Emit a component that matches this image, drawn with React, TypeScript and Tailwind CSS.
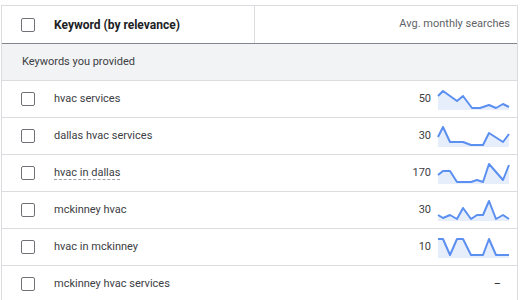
const ROWS: { keyword: string; searches: string; points?: number[][]; dotted?: boolean }[] = [
  {
    keyword: "hvac services",
    searches: "50",
    points: [[0, 7], [5, 2], [19, 12], [25, 7], [34, 19], [42, 19], [51, 16], [58, 19], [65, 15], [71, 18]],
  },
  {
    keyword: "dallas hvac services",
    searches: "30",
    points: [[0, 11], [5, 1], [12, 16], [25, 16], [33, 19], [45, 19], [51, 7], [65, 16], [71, 8]],
  },
  {
    keyword: "hvac in dallas",
    searches: "170",
    dotted: true,
    points: [[0, 12], [5, 8], [12, 8], [19, 19], [33, 19], [39, 17], [45, 19], [51, 1], [65, 17], [71, 2]],
  },
  {
    keyword: "mckinney hvac",
    searches: "30",
    points: [[0, 15], [5, 18], [12, 15], [19, 19], [25, 8], [33, 19], [39, 15], [45, 15], [51, 1], [58, 19], [65, 15], [71, 19]],
  },
  {
    keyword: "hvac in mckinney",
    searches: "10",
    points: [[0, 2], [5, 2], [12, 18], [19, 2], [25, 2], [33, 18], [45, 18], [51, 2], [58, 18], [71, 18]],
  },
  { keyword: "mckinney hvac services", searches: "–" },
];

function Checkbox() {
  return <div className="h-[14px] w-[14px] shrink-0 rounded-[2px] border-[1.5px] border-[#6f7377] bg-white" />;
}

function Sparkline({ points }: { points: number[][] }) {
  const line = points.map((p) => `${p[0] + 1},${p[1] + 1}`).join(" ");
  const area = `1,22 ${line} 72,22`;
  return (
    <svg width="73" height="23" viewBox="0 0 73 23" className="ml-[6px] block">
      <polygon points={area} fill="#e6eefc" />
      <polyline points={line} fill="none" stroke="#5b8ff0" strokeWidth="2" strokeLinejoin="round" />
    </svg>
  );
}

export default function App() {
  return (
    <div className="h-[300px] w-[521px] overflow-hidden bg-white pt-[5px] pl-[1px] font-['Roboto',sans-serif] text-[11px]">
      <div className="w-[517px] border-t border-r border-l border-[#dadce0]">
        {/* header */}
        <div className="flex h-[38px] border-b border-[#80868b]">
          <div className="flex w-[253px] items-center border-r border-[#dadce0] pl-[19px]">
            <Checkbox />
            <span className="ml-[19px] text-[12px] font-bold text-[#202124]">Keyword (by relevance)</span>
          </div>
          <div className="flex flex-1 items-center justify-end pr-[7px] text-[#5f6368]">
            Avg. monthly searches
          </div>
        </div>

        {/* group */}
        <div className="flex h-[37px] items-center border-b border-[#dadce0] bg-[#f1f3f4] pl-[20px] text-[#3c4043]">
          Keywords you provided
        </div>

        {ROWS.map((r) => (
          <div key={r.keyword} className="flex h-[37px] items-center border-b border-[#dadce0]">
            <div className="flex w-[253px] items-center pl-[19px]">
              <Checkbox />
              <span
                className={
                  "ml-[19px] text-[#3c4043] " +
                  (r.dotted ? "underline decoration-dashed decoration-[#9aa0a6] underline-offset-[3px]" : "")
                }
              >
                {r.keyword}
              </span>
            </div>
            <div className="flex flex-1 items-center justify-end pr-[7px] text-[#3c4043]">
              {r.points ? (
                <>
                  <span>{r.searches}</span>
                  <Sparkline points={r.points} />
                </>
              ) : (
                <span className="mr-[9px] text-[#202124]">{r.searches}</span>
              )}
            </div>
          </div>
        ))}
      </div>
    </div>
  );
}
